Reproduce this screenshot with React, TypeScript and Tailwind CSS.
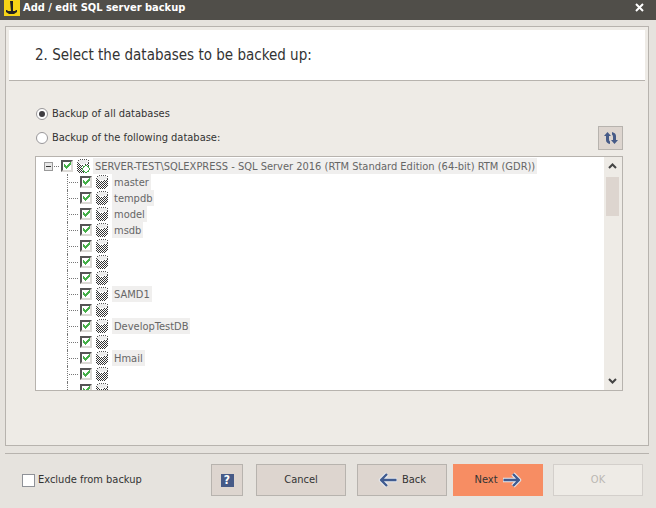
import { useState } from 'react'
import { clsx } from 'clsx'

const databases = [
  'master', 'tempdb', 'model', 'msdb', '', '', '', 'SAMD1', '', 'DevelopTestDB', '', 'Hmail', '', '',
]

function DatabaseIcon({ root = false }: { root?: boolean }) {
  return (
    <svg width="14" height="14" viewBox="0 0 14 14" shapeRendering="crispEdges" className="shrink-0">
      <defs>
        <pattern id="dither" width="2" height="2" patternUnits="userSpaceOnUse">
          <rect width="1" height="1" fill="#333" />
          <rect x="1" y="1" width="1" height="1" fill="#333" />
        </pattern>
      </defs>
      <path d="M4 0h1v1h-1z M6 0h1v1h-1z M8 0h1v1h-1z M10 0h1v1h-1z M2 1h1v1h-1z M12 1h1v1h-1z M1 3h1v1h-1z M12 3h1v1h-1z" fill="#555" />
      <path d="M3 1h8v1h1v2h-2v1h-6v-1h-2v-2h1z" fill="#ececec" />
      <path d="M1 4h2v1h2v1h4v-1h2v-1h2v8h-1v1h-1v1h-8v-1h-1v-1h-1z" fill="url(#dither)" />
      {root && (
        <>
          <path d="M8 6h4v1h1v1h1v4h-1v1h-1v1h-4v-1h-1v-1h-1v-4h1v-1h1z" fill="#fff" />
          <path d="M9 6h2v1h-2z M7 7h2v1h-2z M11 7h2v1h-2z M6 9h1v2h-1z M7 8h1v1h-1z M12 8h1v1h-1z M13 9h1v2h-1z M7 11h1v1h-1z M12 11h1v1h-1z M7 12h2v1h-2z M11 12h2v1h-2z M9 13h2v1h-2z" fill="#3fa843" />
        </>
      )}
    </svg>
  )
}

function TreeCheckbox({ label }: { label: string }) {
  return (
    <span className="grid size-3 shrink-0">
      <input
        type="checkbox"
        defaultChecked
        aria-label={label}
        className="peer col-start-1 row-start-1 size-3 appearance-none border-2 border-t-[#555] border-r-[#dcdad6] border-b-[#dcdad6] border-l-[#555] bg-white"
      />
      <svg viewBox="0 0 12 12" shapeRendering="crispEdges" className="pointer-events-none invisible col-start-1 row-start-1 size-3 peer-checked:visible">
        <path d="M3 4h1v1h1v1h1v-1h1v-1h1v-1h1v-1h1v3h-1v1h-1v1h-1v1h-1v1h-1v-1h-1v-1h-1z" fill="#45b049" />
      </svg>
    </span>
  )
}

function BackArrow({ flip = false }: { flip?: boolean }) {
  return (
    <svg width="20" height="16" viewBox="0 0 20 16" fill="none" strokeLinejoin="round" className={clsx('shrink-0', flip && 'rotate-180')}>
      <path d="M19 8H4M9 2 3 8l6 6" stroke="#e9ebef" strokeWidth="4.4" />
      <path d="M18.500 8H4M9 2 3 8l6 6" stroke="#405b90" strokeWidth="2.4" />
    </svg>
  )
}

const button = 'flex h-8 items-center justify-center border border-[#b7b3ae] bg-[#ddd5cf]'

export default function App() {
  const [mode, setMode] = useState('all')
  const [open, setOpen] = useState(true)

  return (
    <div className="flex min-h-screen flex-col bg-[#e6e3de] font-['DejaVu_Sans_Condensed','DejaVu_Sans',sans-serif] text-[11px] leading-4 text-[#333]">
      <header className="flex h-5 items-center justify-between bg-[#504e49] pr-3 pl-1 text-white">
        <div className="flex h-5 items-start gap-[3px]">
          <svg width="16" height="16" viewBox="0 0 16 16">
            <path d="M0 0h16v16H0z" fill="#f7d416" />
            <path d="M6 1h3v10h2l1-1h1v2l-3 2H5l-3-2v-2h1l1 1h3z" fill="#222" />
          </svg>
          <h1 className="text-[11px] leading-4 font-bold">Add / edit SQL server backup</h1>
        </div>
        <button type="button" aria-label="Close" className="pb-1.5">
          <svg width="9" height="9" viewBox="0 0 9 9" fill="none" stroke="#fff" strokeWidth="2">
            <path d="m1 1 7 7M8 1 1 8" />
          </svg>
        </button>
      </header>

      <main className="mt-1.5 mr-[7px] ml-[5px] grow border border-[#b7b3ae] bg-[#eeebe6]">
        <div className="m-[3px] flex h-[51px] items-center border-b border-[#b7b3ae] bg-white px-[26px]">
          <h2 className="text-[15px] leading-5">2. Select the databases to be backed up:</h2>
        </div>

        <div className="pt-5 pr-[25px] pl-[29px]">
          <div className="flex items-end justify-between pt-[2px]">
            <div className="flex flex-col gap-2 pb-1 pl-px">
              {[
                { value: 'all', label: 'Backup of all databases' },
                { value: 'one', label: 'Backup of the following database:' },
              ].map(item => (
                <label key={item.value} className="flex items-center gap-1">
                  <span className="grid size-3 place-items-center">
                    <input
                      type="radio"
                      name="mode"
                      checked={mode === item.value}
                      onChange={() => setMode(item.value)}
                      className="peer col-start-1 row-start-1 size-3 appearance-none rounded-full border border-[#99979a] bg-white"
                    />
                    <span className="pointer-events-none invisible col-start-1 row-start-1 size-1.5 rounded-full bg-[#3f3d42] peer-checked:visible" />
                  </span>
                  {item.label}
                </label>
              ))}
            </div>
            <button type="button" aria-label="Refresh" className="flex h-6 w-[25px] items-center justify-center border border-[#b7b3ae] bg-[#ddd5cf]">
              <svg width="14" height="12" viewBox="0 0 14 12" fill="#465a87">
                <path d="M3.500 0 0 4h2v4q0 3 4 4V9.500Q5 9 5 7V4h2z" />
                <path d="M10.500 12 14 8h-2V4q0-3-4-4v2.500Q9 3 9 5v3H7z" />
              </svg>
            </button>
          </div>

          <div className="mt-1.5 flex h-[235px] border border-[#b7b3ae] bg-white">
            <div className="min-w-0 grow overflow-hidden pt-px pl-2 whitespace-nowrap text-[#666]">
              <div className="flex h-4 items-center">
                <button
                  type="button"
                  aria-label="Toggle server"
                  onClick={() => setOpen(!open)}
                  className="flex size-[9px] items-center justify-center border border-[#999] bg-[#e8e8e8]"
                >
                  <span className="h-px w-[5px] bg-[#333]" />
                </button>
                <span className="mr-0.5 ml-px w-[5px] border-t border-dotted border-[#777]" />
                <TreeCheckbox label="SERVER-TEST" />
                <span className="ml-[3px] flex"><DatabaseIcon root /></span>
                <span className="ml-[3px] bg-[#f0efee] px-0.5 pt-px leading-[15px]">
                  SERVER-TEST\SQLEXPRESS - SQL Server 2016 (RTM Standard Edition (64-bit) RTM (GDR))
                </span>
              </div>
              {open && databases.map((name, i) => (
                <div key={i} className="flex h-4 items-center pl-[23px]">
                  <span className="h-4 border-l border-dotted border-[#777]" />
                  <span className="mr-0.5 ml-px w-[9px] border-t border-dotted border-[#777]" />
                  <TreeCheckbox label={name || 'Database'} />
                  <span className="ml-[3px] flex"><DatabaseIcon /></span>
                  {name && <span className="ml-[3px] bg-[#f0efee] px-0.5 pt-px leading-[15px]">{name}</span>}
                </div>
              ))}
            </div>
            <div className="flex w-[18px] shrink-0 flex-col items-center bg-[#eeebe6] py-1.5 pr-px">
              <svg width="9" height="6" viewBox="0 0 9 6" fill="none" stroke="#444" strokeWidth="2">
                <path d="m1 5 3.500-3.500L8 5" />
              </svg>
              <div className="mt-2 h-[39px] w-[13px] bg-[#ddd5cf]" />
              <svg width="9" height="6" viewBox="0 0 9 6" fill="none" stroke="#444" strokeWidth="2" className="mt-auto">
                <path d="m1 1 3.500 3.500L8 1" />
              </svg>
            </div>
          </div>
        </div>
      </main>

      <footer className="mt-[7px] mr-[7px] ml-[5px] flex items-center justify-between border-t border-[#b7b3ae] pt-2.5 pr-1.5 pb-3 pl-[17px]">
        <label className="flex items-center gap-[3px]">
          <input type="checkbox" className="size-[13px] appearance-none border border-[#8f9298] bg-white checked:bg-[#465a87]" />
          Exclude from backup
        </label>
        <div className="flex">
          <button type="button" aria-label="Help" className={clsx(button, 'w-8')}>
            <span className="flex size-[13px] items-center justify-center bg-[#465a87] text-[12px] leading-3 font-bold text-white">?</span>
          </button>
          <button type="button" className={clsx(button, 'ml-[13px] w-[90px]')}>Cancel</button>
          <button type="button" className={clsx(button, 'ml-[11px] w-[90px] gap-1')}>
            <BackArrow />
            Back
          </button>
          <button type="button" className="ml-1.5 flex h-8 w-[90px] items-center justify-center gap-1 bg-[#f78d63]">
            Next
            <BackArrow flip />
          </button>
          <button type="button" disabled className="ml-2.5 h-8 w-[90px] border border-[#d3cfcb] bg-[#eeebe6] text-[#bbb7b3]">OK</button>
        </div>
      </footer>
    </div>
  )
}
